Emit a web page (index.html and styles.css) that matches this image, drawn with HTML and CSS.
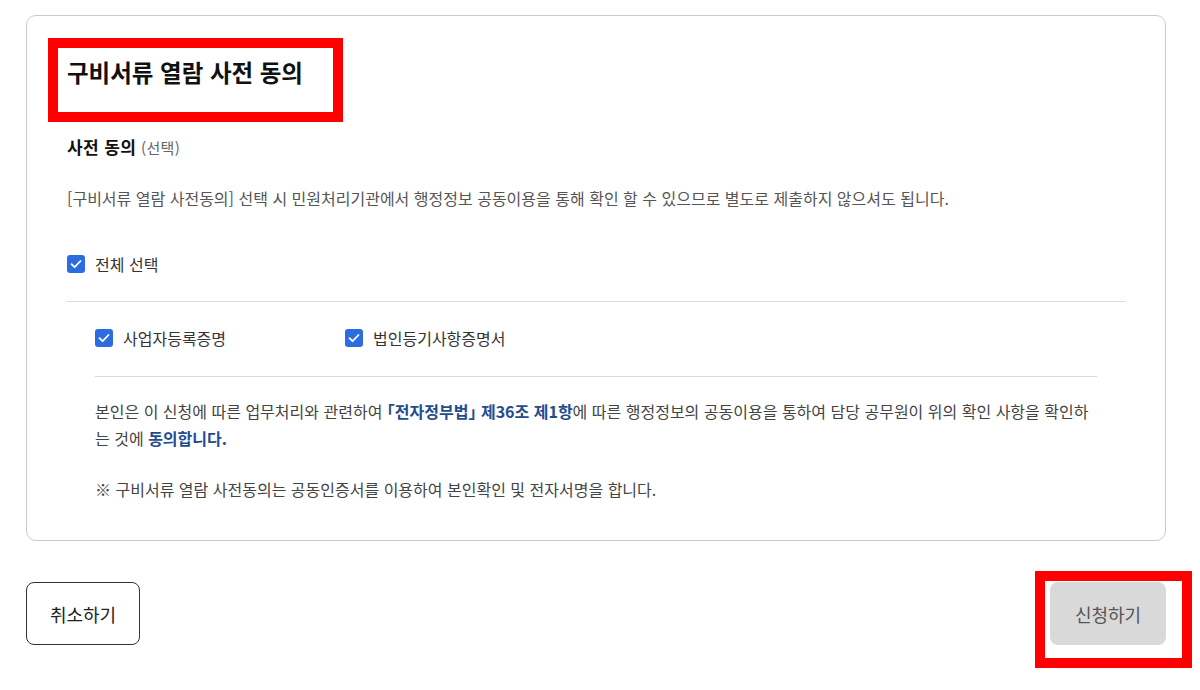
FILE: index.html
```html
<!DOCTYPE html>
<html lang="ko">
<head>
<meta charset="utf-8">
<link rel="stylesheet" href="styles.css">
</head>
<body>
<div class="page">
  <section class="card">
    <h2 class="title">구비서류 열람 사전 동의</h2>
    <div class="sub-title"><strong>사전 동의</strong> <span class="opt">(선택)</span></div>
    <p class="desc">[구비서류 열람 사전동의] 선택 시 민원처리기관에서 행정정보 공동이용을 통해 확인 할 수 있으므로 별도로 제출하지 않으셔도 됩니다.</p>
    <label class="check all">
      <span class="box"><svg viewBox="0 0 18 18" width="18" height="18"><path d="M4.5 9.2 L7.6 12.2 L13.5 6" fill="none" stroke="#fff" stroke-width="1.8" stroke-linecap="round" stroke-linejoin="round"/></svg></span>
      <span class="label">전체 선택</span>
    </label>
    <div class="divider"></div>
    <div class="inner">
      <div class="items">
        <label class="check item">
          <span class="box"><svg viewBox="0 0 18 18" width="18" height="18"><path d="M4.5 9.2 L7.6 12.2 L13.5 6" fill="none" stroke="#fff" stroke-width="1.8" stroke-linecap="round" stroke-linejoin="round"/></svg></span>
          <span class="label">사업자등록증명</span>
        </label>
        <label class="check item">
          <span class="box"><svg viewBox="0 0 18 18" width="18" height="18"><path d="M4.5 9.2 L7.6 12.2 L13.5 6" fill="none" stroke="#fff" stroke-width="1.8" stroke-linecap="round" stroke-linejoin="round"/></svg></span>
          <span class="label">법인등기사항증명서</span>
        </label>
      </div>
      <div class="divider"></div>
      <p class="agree">본인은 이 신청에 따른 업무처리와 관련하여 <b class="hl">「전자정부법」 제36조 제1항</b>에 따른 행정정보의 공동이용을 통하여 담당 공무원이 위의 확인 사항을 확인하는 것에 <b class="hl">동의합니다.</b></p>
      <p class="note">※ 구비서류 열람 사전동의는 공동인증서를 이용하여 본인확인 및 전자서명을 합니다.</p>
    </div>
  </section>
  <div class="actions">
    <button class="btn cancel" type="button">취소하기</button>
    <button class="btn submit" type="button">신청하기</button>
  </div>
  <div class="mark mark-title"></div>
  <div class="mark mark-submit"></div>
</div>
</body>
</html>
```

FILE: styles.css
```css
* { box-sizing: border-box; }
html, body { margin: 0; padding: 0; background: #fff; }
body {
  font-family: "Noto Sans CJK KR", "Noto Sans", sans-serif;
  color: #333;
}
.page {
  position: relative;
  width: 1200px;
  height: 690px;
  padding: 15px 34px 0 26px;
}
.card {
  width: 1140px;
  height: 526px;
  border: 1px solid #c9c9c9;
  border-radius: 10px;
  padding: 40px 40px 0 40px;
}
.title {
  margin: 0;
  font-size: 23.5px;
  line-height: 32px;
  font-weight: 700;
  color: #111;
}
.sub-title {
  margin-top: 47px;
  font-size: 17px;
  line-height: 24px;
  color: #111;
}
.sub-title strong { font-weight: 700; letter-spacing: 0.4px; }
.opt { font-size: 15px; color: #666; letter-spacing: 0.3px; }
.desc {
  margin: 26px 0 0;
  font-size: 16px;
  line-height: 24px;
  color: #555;
}
.check {
  display: flex;
  align-items: center;
  gap: 10px;
  height: 24px;
}
.check.all { margin-top: 42px; }
.box {
  width: 18px;
  height: 18px;
  border-radius: 3px;
  background: #2b6de0;
  display: flex;
}
.label { font-size: 16px; color: #333; line-height: 24px; }
.divider { height: 1px; background: #dcdcdc; }
.card > .divider { margin-top: 25px; }
.inner { padding: 0 28px; }
.items { display: flex; margin-top: 24px; margin-bottom: 26px; }
.item { width: 250px; }
.agree {
  margin: 21px 0 0;
  font-size: 16px;
  line-height: 27px;
  color: #444;
  font-feature-settings: "halt";
}
.hl { color: #234c8f; font-weight: 700; }
.note {
  margin: 25px 0 0;
  font-size: 16px;
  line-height: 24px;
  color: #444;
}
.actions {
  display: flex;
  justify-content: space-between;
  width: 1140px;
  margin-top: 41px;
}
.btn {
  height: 63px;
  border-radius: 8px;
  font-family: inherit;
  font-size: 18px;
  cursor: pointer;
}
.cancel {
  width: 114px;
  background: #fff;
  border: 1px solid #333;
  color: #222;
}
.submit {
  width: 116px;
  background: #d9d9d9;
  border: none;
  color: #555;
}
.mark {
  position: absolute;
  border: 10px solid #ff0000;
  pointer-events: none;
}
.mark-title { left: 48px; top: 38px; width: 295px; height: 84px; }
.mark-submit { left: 1035px; top: 571px; width: 157px; height: 97px; }
```
